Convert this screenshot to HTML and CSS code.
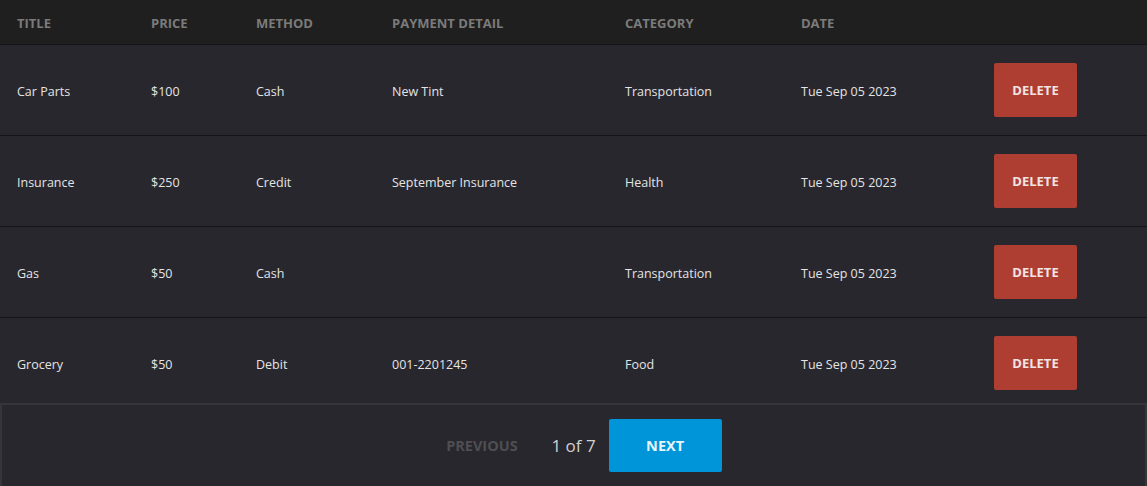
FILE: index.html
```html
<!DOCTYPE html>
<html>
<head>
<meta charset="utf-8">
<link rel="stylesheet" href="styles.css">
</head>
<body>
<div class="table">
  <div class="row head">
    <div>Title</div><div>Price</div><div>Method</div><div>Payment Detail</div><div>Category</div><div>Date</div><div></div>
  </div>
  <div class="row">
    <div>Car Parts</div><div>$100</div><div>Cash</div><div>New Tint</div><div>Transportation</div><div>Tue Sep 05 2023</div><div><button class="del">DELETE</button></div>
  </div>
  <div class="row">
    <div>Insurance</div><div>$250</div><div>Credit</div><div>September Insurance</div><div>Health</div><div>Tue Sep 05 2023</div><div><button class="del">DELETE</button></div>
  </div>
  <div class="row">
    <div>Gas</div><div>$50</div><div>Cash</div><div></div><div>Transportation</div><div>Tue Sep 05 2023</div><div><button class="del">DELETE</button></div>
  </div>
  <div class="row last">
    <div>Grocery</div><div>$50</div><div>Debit</div><div>001-2201245</div><div>Food</div><div>Tue Sep 05 2023</div><div><button class="del">DELETE</button></div>
  </div>
  <div class="pager">
    <button class="btn prev">PREVIOUS</button>
    <span class="count">1 of 7</span>
    <button class="btn next">NEXT</button>
  </div>
</div>
</body>
</html>
```
FILE: styles.css
```css
* { box-sizing: border-box; }
html, body { margin: 0; padding: 0; }
body {
  background: #28272e;
  font-family: "Open Sans", "Noto Sans", sans-serif;
  color: #e4e4e4;
  font-size: 12.5px;
  width: 1147px;
  height: 486px;
  overflow: hidden;
}
.row {
  display: grid;
  grid-template-columns: 134px 105px 136px 233px 176px 193px 1fr;
  align-items: center;
  padding-left: 17px;
  padding-top: 3px;
  height: 91px;
  border-bottom: 1px solid #151518;
  background: #28272e;
}
.row .del { margin-top: -3px; }
.row.head {
  height: 45px;
  padding-top: 2px;
  background: #1f1f1f;
  color: #7b7b7b;
  font-weight: 700;
  text-transform: uppercase;
  font-size: 13px;
}
.row.last { height: 85px; padding-top: 8px; border-bottom: none; }
.del {
  width: 83px;
  height: 54px;
  border: none;
  border-radius: 2px;
  background: #ae3e32;
  color: #f2e4e4;
  font-family: inherit;
  font-weight: 700;
  font-size: 13px;
  padding: 0;
}
.pager {
  height: 83px;
  border: 2px solid #35353a;
  border-bottom: none;
  display: flex;
  justify-content: center;
  align-items: center;
  gap: 13px;
}
.btn {
  width: 113px;
  height: 53px;
  border: none;
  border-radius: 2px;
  font-family: inherit;
  font-weight: 700;
  font-size: 14.5px;
  padding: 0;
}
.prev { background: transparent; color: #4e4e53; }
.next { background: #0094d9; color: #e8f4fb; }
.count { font-size: 17px; color: #d0d0d0; }
```
